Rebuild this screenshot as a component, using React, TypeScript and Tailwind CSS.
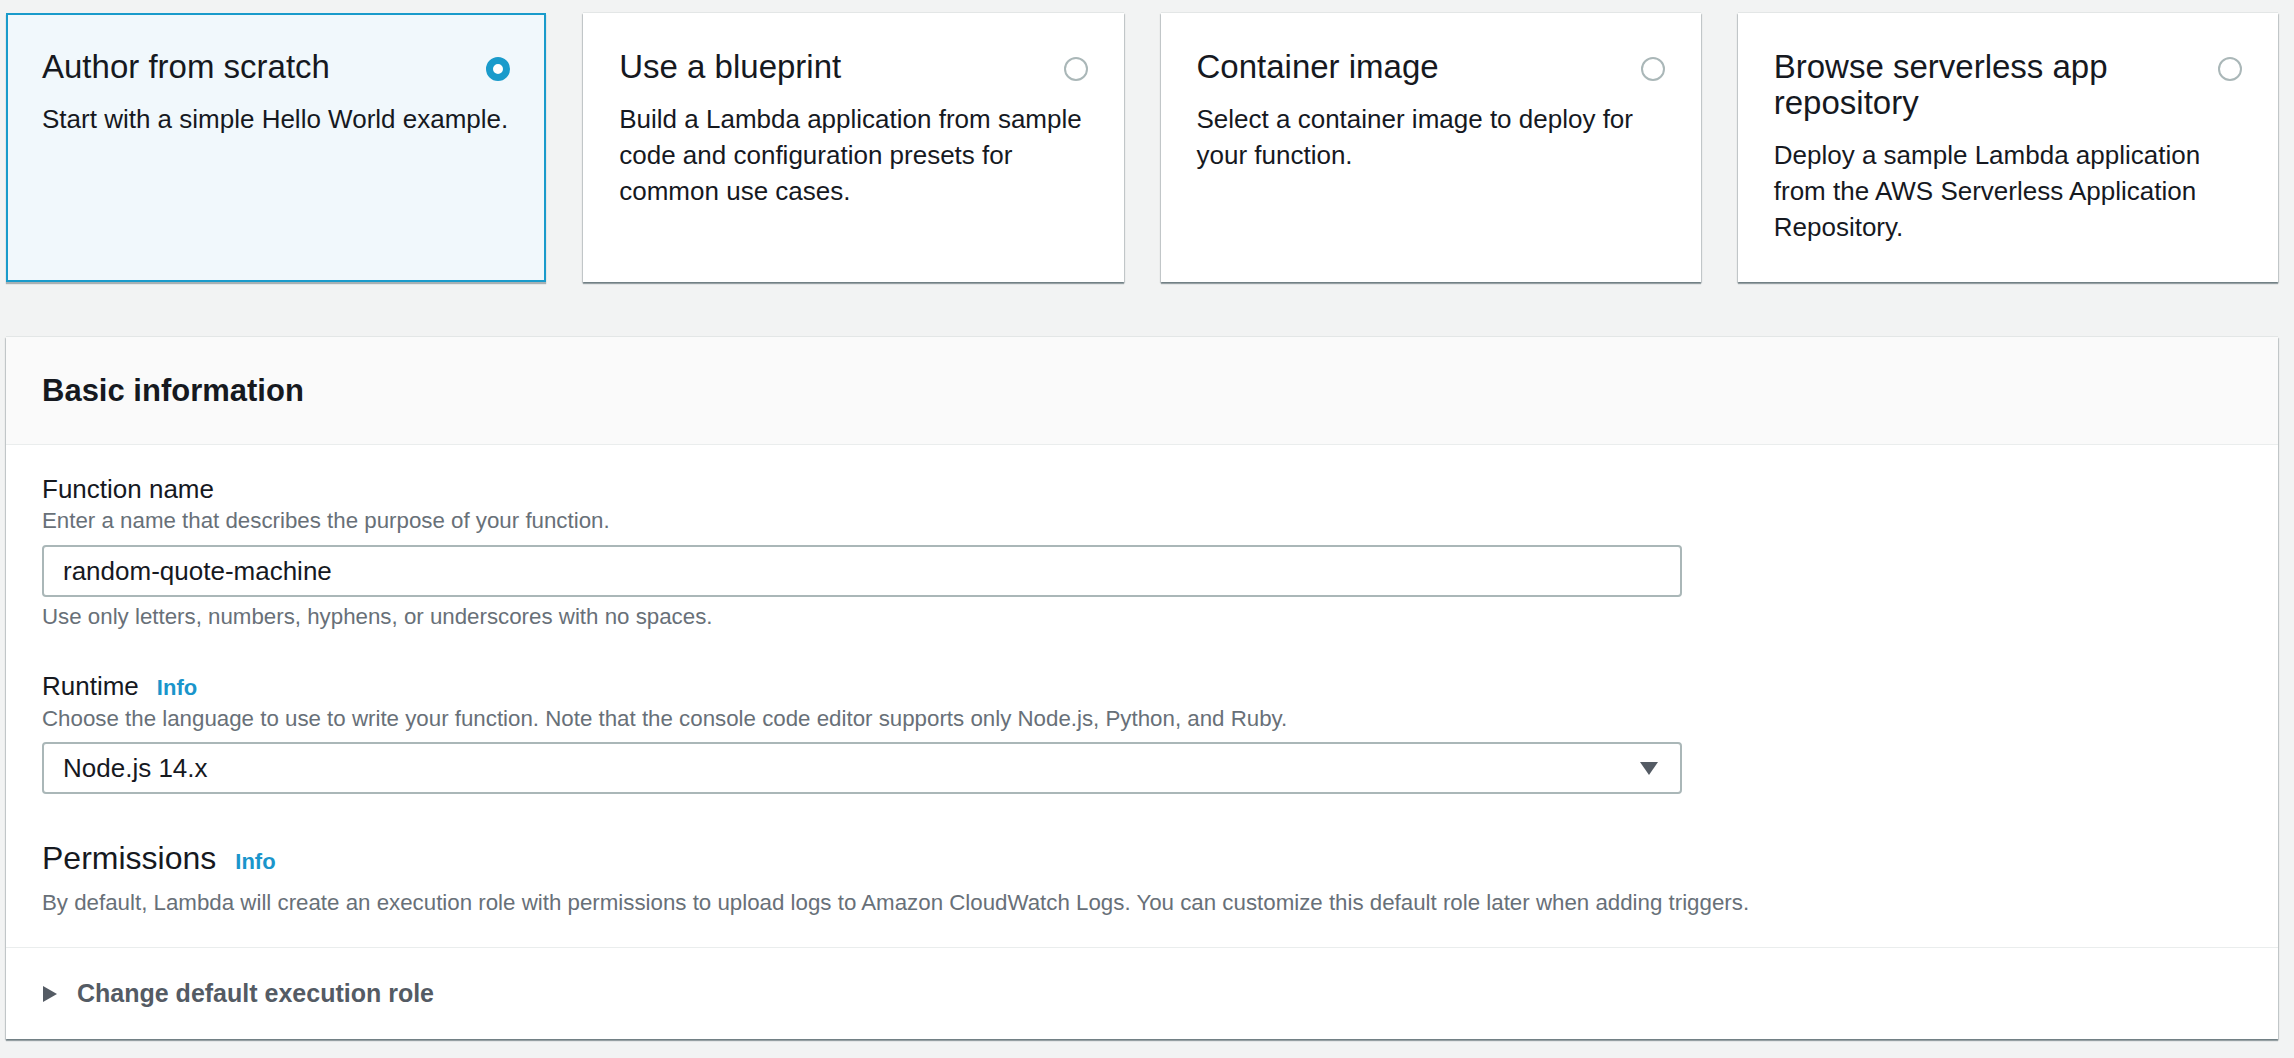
import React from "react";

const cards = [
  {
    title: "Author from scratch",
    desc: "Start with a simple Hello World example.",
    selected: true,
  },
  {
    title: "Use a blueprint",
    desc: "Build a Lambda application from sample code and configuration presets for common use cases.",
    selected: false,
  },
  {
    title: "Container image",
    desc: "Select a container image to deploy for your function.",
    selected: false,
  },
  {
    title: "Browse serverless app repository",
    desc: "Deploy a sample Lambda application from the AWS Serverless Application Repository.",
    selected: false,
  },
];

function Radio({ checked }: { checked: boolean }) {
  return checked ? (
    <div className="mt-[8px] h-[24px] w-[24px] shrink-0 rounded-full border-[7px] border-[#1a9bcb] bg-white" />
  ) : (
    <div className="mt-[8px] h-[24px] w-[24px] shrink-0 rounded-full border-2 border-[#aab7b8] bg-white" />
  );
}

export default function App() {
  return (
    <div className="min-h-screen bg-[#f2f3f3] pl-[6px] pr-[16px] pt-[13px] pb-[20px] font-['Liberation_Sans',Arial,sans-serif] text-[#16191f]">
      <div className="grid grid-cols-4 gap-[37px]">
        {cards.map((c) => (
          <div
            key={c.title}
            className={
              c.selected
                ? "h-[269px] border-2 border-[#1a9bcb] bg-[#f1f8fc] px-[34px] pt-[34px] shadow-[0_2px_1px_0_rgba(0,28,36,0.3)]"
                : "h-[269px] border-2 border-white bg-white px-[34px] pt-[34px] shadow-[0_2px_1px_0_rgba(0,28,36,0.35),1px_1px_1px_0_rgba(0,28,36,0.15),-1px_1px_1px_0_rgba(0,28,36,0.15),0_-1px_0_0_rgba(0,28,36,0.06)]"
            }
          >
            <div className="flex items-start justify-between gap-[24px]">
              <div className="text-[33px] leading-[36px]">{c.title}</div>
              <Radio checked={c.selected} />
            </div>
            <div className="mt-[16px] text-[26px] leading-[36px]">{c.desc}</div>
          </div>
        ))}
      </div>

      <div className="mt-[55px] bg-white shadow-[0_2px_1px_0_rgba(0,28,36,0.35),1px_1px_1px_0_rgba(0,28,36,0.15),-1px_1px_1px_0_rgba(0,28,36,0.15),0_-1px_0_0_rgba(0,28,36,0.06)]">
        <div className="flex h-[108px] items-center border-b border-[#eaeded] bg-[#fafafa] px-[36px]">
          <h2 className="text-[31px] font-bold leading-[40px]">Basic information</h2>
        </div>

        <div className="px-[36px] pt-[27px] pb-[29px]">
          <div className="text-[26px] leading-[34px]">Function name</div>
          <div className="text-[22.3px] leading-[30px] text-[#687078]">
            Enter a name that describes the purpose of your function.
          </div>
          <div className="mt-[9px] flex h-[52px] w-[1640px] items-center rounded-[4px] border-2 border-[#aab7b8] px-[19px] text-[26px]">
            random-quote-machine
          </div>
          <div className="mt-[5px] text-[22.3px] leading-[30px] text-[#687078]">
            Use only letters, numbers, hyphens, or underscores with no spaces.
          </div>

          <div className="mt-[37px] flex items-baseline">
            <span className="text-[26px] leading-[34px]">Runtime</span>
            <span className="ml-[18px] text-[22px] font-bold text-[#1a95cb]">Info</span>
          </div>
          <div className="text-[22.3px] leading-[30px] text-[#687078]">
            Choose the language to use to write your function. Note that the console code editor supports only Node.js, Python, and Ruby.
          </div>
          <div className="mt-[8px] flex h-[52px] w-[1640px] items-center justify-between rounded-[4px] border-2 border-[#aab7b8] pl-[19px] pr-[22px] text-[26px]">
            <span>Node.js 14.x</span>
            <svg width="18" height="13" viewBox="0 0 18 13">
              <polygon points="0,0 18,0 9,13" fill="#545b64" />
            </svg>
          </div>

          <div className="mt-[44px] flex items-baseline">
            <span className="text-[32px] leading-[40px]">Permissions</span>
            <span className="ml-[19px] text-[22px] font-bold text-[#1a95cb]">Info</span>
          </div>
          <div className="mt-[10px] text-[22.3px] leading-[30px] text-[#687078]">
            By default, Lambda will create an execution role with permissions to upload logs to Amazon CloudWatch Logs. You can customize this default role later when adding triggers.
          </div>
        </div>

        <div className="flex h-[92px] items-center border-t border-[#eaeded] pl-[37px]">
          <svg width="14" height="16" viewBox="0 0 14 16">
            <polygon points="0,0 14,8 0,16" fill="#545b64" />
          </svg>
          <span className="ml-[20px] text-[25px] font-bold text-[#545b64]">Change default execution role</span>
        </div>
      </div>
    </div>
  );
}
